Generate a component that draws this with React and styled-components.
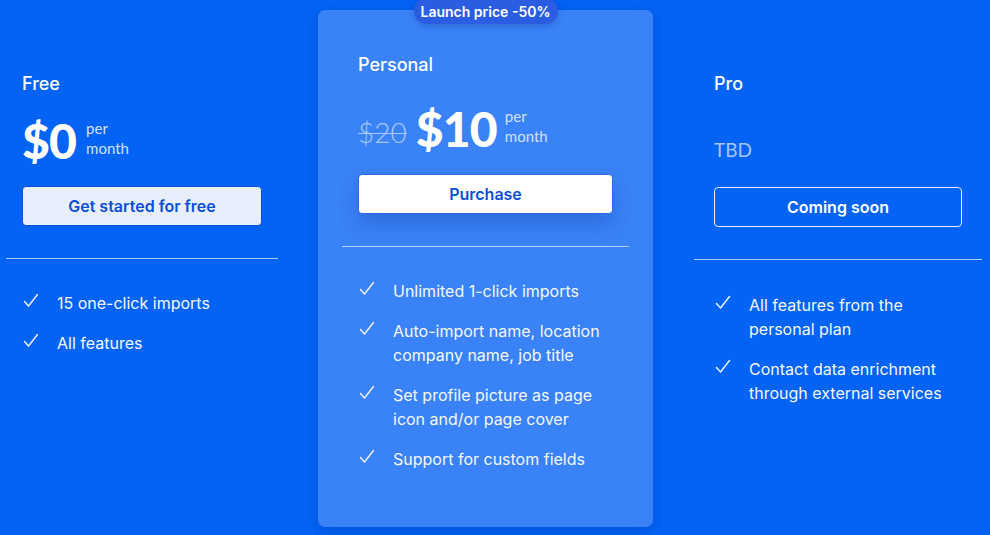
import React from "react";
import styled, { createGlobalStyle } from "styled-components";

const GlobalStyle = createGlobalStyle`
    html, body {
        margin: 0;
        padding: 0;
        background: #0263f5;
        font-family: Inter, "Noto Sans", sans-serif;
        -webkit-font-smoothing: antialiased;
    }
`;

const Page = styled.div`
    display: flex;
    align-items: flex-start;
    gap: 40px;
    height: 535px;
    padding: 10px 0 0 6px;
    box-sizing: border-box;
    overflow: hidden;
`;

const Column = styled.div`
    position: relative;
    width: ${(p) => p.width}px;
    flex: none;
    box-sizing: border-box;
    padding: ${(p) => (p.featured ? "43px 24px 0" : "62px 0 0")};
    height: ${(p) => (p.featured ? "517px" : "auto")};
    background: ${(p) => (p.featured ? "#3a82f7" : "transparent")};
    border-radius: 7px;
    box-shadow: ${(p) => (p.featured ? "0 4px 14px rgba(0, 40, 140, 0.25)" : "none")};
    & + & + & {
        margin-left: 1px;
    }
`;

const Badge = styled.div`
    position: absolute;
    top: -12px;
    left: 50%;
    transform: translateX(-50%);
    height: 26px;
    padding: 0 7px;
    display: flex;
    align-items: center;
    border-radius: 13px;
    background: #2a5de2;
    color: #fff;
    font-size: 14px;
    font-weight: 600;
    white-space: nowrap;
    box-shadow: 0 2px 6px rgba(0, 30, 120, 0.25);
`;

const Header = styled.div`
    padding: 0 ${(p) => p.pad}px;
`;

const Title = styled.div`
    color: #fff;
    font-size: 18px;
    font-weight: 500;
    line-height: 24px;
`;

const PriceRow = styled.div`
    display: flex;
    align-items: flex-start;
    height: 48px;
    margin-top: ${(p) => p.gap}px;
    font-family: Lato, "Liberation Sans", sans-serif;
`;

const Price = styled.span`
    color: #fff;
    font-size: 48px;
    font-weight: 900;
    line-height: 48px;
    letter-spacing: -0.8px;
`;

const OldPrice = styled.span`
    align-self: flex-end;
    color: #a9c8fb;
    font-size: 28px;
    font-weight: 300;
    line-height: 28px;
    text-decoration: line-through;
    text-decoration-thickness: 1px;
    margin: 0 9px 7px 0;
`;

const Per = styled.span`
    margin-left: ${(p) => p.gap}px;
    color: #cfe0fd;
    font-size: 15px;
    line-height: 20px;
    margin-top: 1px;
`;

const Tbd = styled.span`
    align-self: flex-end;
    color: #a8c6fa;
    font-size: 19px;
    line-height: 19px;
    padding-bottom: 5px;
`;

const Button = styled.button`
    display: block;
    width: 100%;
    height: 40px;
    margin-top: ${(p) => p.gap}px;
    border-radius: 4px;
    font-family: Inter, sans-serif;
    font-size: 16px;
    font-weight: 600;
    cursor: pointer;
    ${(p) =>
        p.variant === "light" &&
        `
        background: #e7effd;
        color: #0b4fd6;
        border: 1px solid #0b52d9;
    `}
    ${(p) =>
        p.variant === "white" &&
        `
        background: #fff;
        color: #0b4fd6;
        border: 1px solid #2a6ce6;
        box-shadow: 0 10px 18px rgba(20, 60, 170, 0.3);
    `}
    ${(p) =>
        p.variant === "outline" &&
        `
        background: transparent;
        color: #fff;
        border: 1px solid #e8f0ff;
    `}
`;

const Divider = styled.hr`
    margin: 32px 0 0;
    border: none;
    border-top: 1px solid rgba(225, 236, 255, 0.75);
`;

const Features = styled.ul`
    list-style: none;
    margin: ${(p) => p.gap}px 0 0;
    padding: 0 ${(p) => p.pad}px;
    display: flex;
    flex-direction: column;
    gap: 16px;
`;

const Feature = styled.li`
    display: flex;
    align-items: flex-start;
    color: #f4f8ff;
    font-size: 16px;
    line-height: 24px;
`;

const Check = styled.svg`
    flex: none;
    width: 16px;
    height: 16px;
    margin: 2px 18px 0 1px;
`;

const FeatureText = styled.span`
    max-width: ${(p) => p.max}px;
`;

function CheckIcon() {
    return (
        <Check viewBox="0 0 16 16" fill="none">
            <polyline points="1.5,8.5 5.5,13 14.5,1.5" stroke="#eef4ff" strokeWidth="1.4" strokeLinecap="round" strokeLinejoin="round" />
        </Check>
    );
}

function FeatureList({ items, pad, gap, max }) {
    return (
        <Features pad={pad} gap={gap}>
            {items.map((item) => (
                <Feature key={item}>
                    <CheckIcon />
                    <FeatureText max={max}>{item}</FeatureText>
                </Feature>
            ))}
        </Features>
    );
}

export default function App() {
    return (
        <>
            <GlobalStyle />
            <Page>
                <Column width={272}>
                    <Header pad={16}>
                        <Title>Free</Title>
                        <PriceRow gap={21}>
                            <Price>$0</Price>
                            <Per gap={10}>per<br />month</Per>
                        </PriceRow>
                        <Button variant="light" gap={21}>Get started for free</Button>
                    </Header>
                    <Divider />
                    <FeatureList pad={16} gap={32} max={210} items={["15 one-click imports", "All features"]} />
                </Column>

                <Column width={335} featured>
                    <Badge>Launch price -50%</Badge>
                    <Header pad={16}>
                        <Title>Personal</Title>
                        <PriceRow gap={28}>
                            <OldPrice>$20</OldPrice>
                            <Price>$10</Price>
                            <Per gap={8}>per<br />month</Per>
                        </PriceRow>
                        <Button variant="white" gap={21}>Purchase</Button>
                    </Header>
                    <Divider />
                    <FeatureList
                        pad={16}
                        gap={32}
                        max={220}
                        items={[
                            "Unlimited 1-click imports",
                            "Auto-import name, location company name, job title",
                            "Set profile picture as page icon and/or page cover",
                            "Support for custom fields",
                        ]}
                    />
                </Column>

                <Column width={288}>
                    <Header pad={20}>
                        <Title>Pro</Title>
                        <PriceRow gap={20}>
                            <Tbd>TBD</Tbd>
                        </PriceRow>
                        <Button variant="outline" gap={23}>Coming soon</Button>
                    </Header>
                    <Divider />
                    <FeatureList
                        pad={20}
                        gap={33}
                        max={212}
                        items={["All features from the personal plan", "Contact data enrichment through external services"]}
                    />
                </Column>
            </Page>
        </>
    );
}
